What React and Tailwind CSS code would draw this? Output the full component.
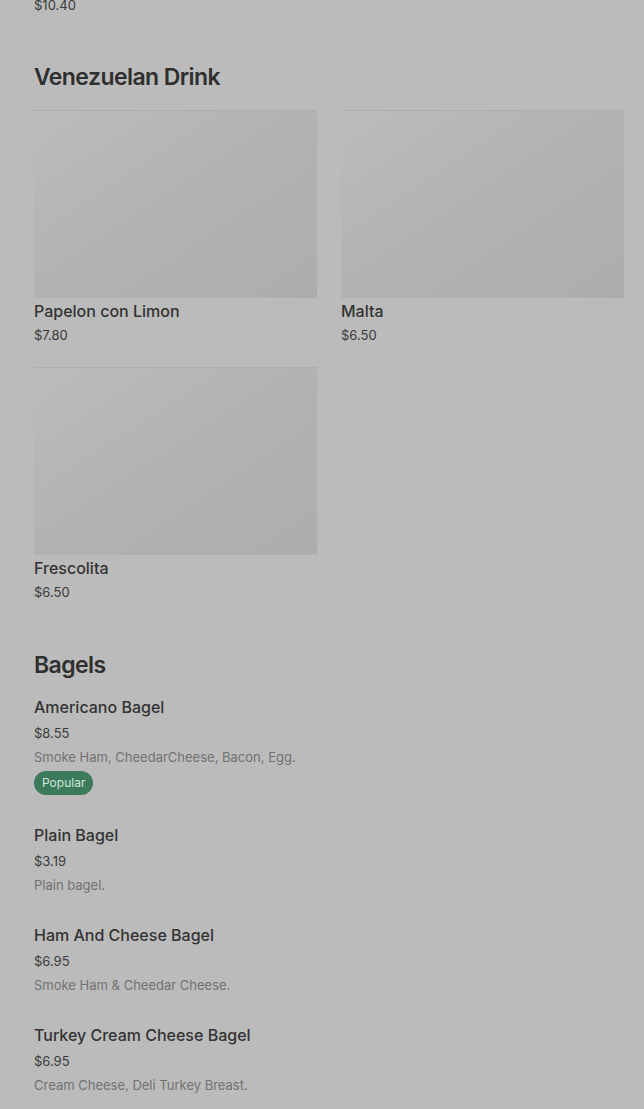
import React from 'react';

const drinks = [
  { name: 'Papelon con Limon', price: '$7.80' },
  { name: 'Malta', price: '$6.50' },
  { name: 'Frescolita', price: '$6.50' },
];

const bagels = [
  { name: 'Americano Bagel', price: '$8.55', desc: 'Smoke Ham, CheedarCheese, Bacon, Egg.', popular: true },
  { name: 'Plain Bagel', price: '$3.19', desc: 'Plain bagel.' },
  { name: 'Ham And Cheese Bagel', price: '$6.95', desc: 'Smoke Ham & Cheedar Cheese.' },
  { name: 'Turkey Cream Cheese Bagel', price: '$6.95', desc: 'Cream Cheese, Deli Turkey Breast.' },
];

const DrinkCard = ({ item }) => (
  <div className="flex flex-col">
    <div className="h-[188px] w-full bg-gradient-to-br from-[#bcbcbc] via-[#b2b2b2] to-[#adadad] border-t border-[#aeaeae]" />
    <p className="mt-[1px] text-[16px] leading-6 font-medium text-[#333333]">{item.name}</p>
    <p className="mt-[2px] text-[13px] leading-5 text-[#3a3a3a]">{item.price}</p>
  </div>
);

const BagelItem = ({ item }) => (
  <div className="flex flex-col pb-[28px]">
    <p className="text-[16px] leading-6 font-medium text-[#333333]">{item.name}</p>
    <p className="mt-[4px] text-[13px] leading-5 text-[#3a3a3a]">{item.price}</p>
    <p className="mt-1 text-[13px] leading-5 text-[#727272]">{item.desc}</p>
    {item.popular && (
      <span className="mt-1 self-start h-6 px-2 rounded-full bg-[#3b7a5b] text-[12px] leading-6 text-[#d3e6db]">
        Popular
      </span>
    )}
  </div>
);

export default function App() {
  return (
    <div
      className="min-h-[1109px] w-full overflow-hidden bg-[#bbbbbb] px-[34px]"
      style={{ fontFamily: 'Inter, "Noto Sans", sans-serif' }}
    >
      {/* tail of previous section */}
      <p className="-mt-[5px] text-[13px] leading-5 text-[#3a3a3a]">$10.40</p>

      {/* Venezuelan Drink */}
      <h2 className="mt-[46px] text-[23px] leading-8 font-semibold tracking-tight text-[#2f2f2f]">
        Venezuelan Drink
      </h2>
      <div className="mt-[17px] grid grid-cols-[283px_283px] gap-x-6 gap-y-[22px]">
        {drinks.map((d) => (
          <DrinkCard key={d.name} item={d} />
        ))}
      </div>

      {/* Bagels */}
      <h2 className="mt-[47px] text-[23px] leading-8 font-semibold tracking-tight text-[#2f2f2f]">
        Bagels
      </h2>
      <div className="mt-[14px] flex flex-col">
        {bagels.map((b) => (
          <BagelItem key={b.name} item={b} />
        ))}
      </div>
    </div>
  );
}
